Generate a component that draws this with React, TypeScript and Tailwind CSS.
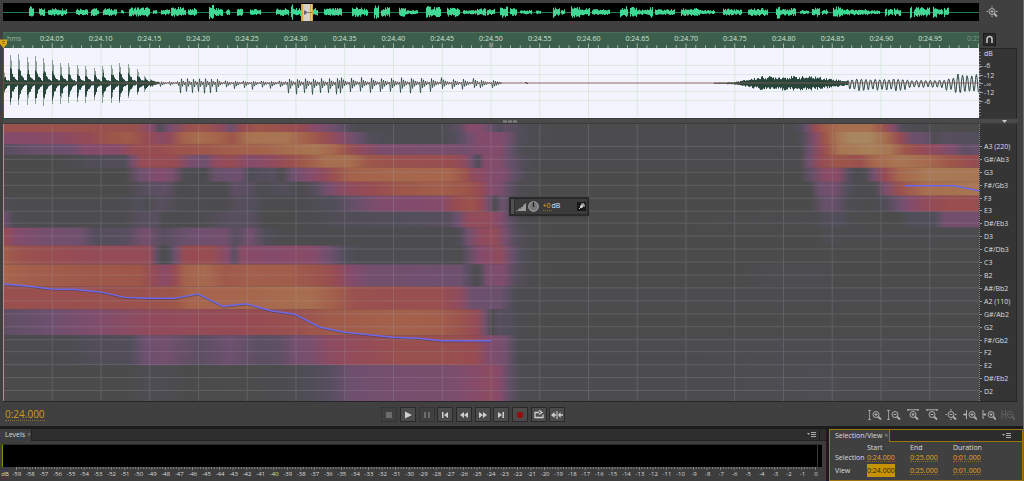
import type { ReactNode } from "react"

type Stop = [number, number]

const PALETTE = [
    [75, 75, 75],
    [81, 78, 90],
    [109, 80, 110],
    [133, 75, 107],
    [151, 75, 82],
    [157, 86, 73],
    [166, 101, 76],
    [168, 118, 82],
    [168, 138, 98],
]

// each band: top, bottom, then [x, level] pairs
const BANDS: { y: [number, number], stops: Stop[] }[] = [
    { y: [124, 132], stops: [[4, 4.5], [60, 4.6], [135, 4.5], [152, 3], [160, 1], [170, 2.5], [190, 4.5], [205, 4.8], [222, 3.5], [231, 2], [242, 4], [260, 5], [280, 4.5], [300, 4], [316, 3], [335, 2], [350, 1], [360, 0.3], [440, 0.3], [460, 1.5], [468, 3], [480, 3], [488, 2], [500, 1], [505, 1.5], [520, 1], [530, 0.4], [560, 0.1], [790, 0.2], [800, 1], [807, 2], [815, 4], [825, 5.5], [840, 6.5], [870, 6.5], [885, 4.5], [893, 3], [902, 1], [915, 0.3], [978, 0]] },
    { y: [132, 144], stops: [[4, 3], [60, 3.3], [90, 3.9], [110, 5], [130, 5.3], [145, 4.2], [160, 3.3], [170, 3.6], [183, 5.8], [200, 6.5], [220, 5.8], [232, 5], [250, 6.8], [285, 7], [305, 5.8], [325, 4.3], [340, 3.2], [355, 2], [370, 1], [385, 0.5], [440, 0.4], [455, 1], [468, 2], [480, 3], [500, 2.8], [508, 2.2], [520, 1], [535, 0.3], [560, 0.1], [795, 0.1], [803, 1], [815, 3], [825, 5], [838, 7], [850, 7.8], [870, 7.8], [885, 6.5], [900, 4], [912, 2], [925, 1.8], [935, 0.6], [945, 1.2], [978, 1]] },
    { y: [144, 155], stops: [[4, 1.2], [30, 1.8], [70, 2], [85, 3], [120, 3.2], [135, 4.2], [160, 4.2], [180, 4.8], [200, 5], [230, 5.5], [260, 5.8], [290, 6.5], [315, 7], [335, 6], [345, 4.8], [360, 3.6], [380, 2.6], [450, 2.5], [465, 2.3], [480, 2.8], [500, 3], [508, 2], [518, 1], [525, 0.3], [560, 0.1], [800, 0.2], [810, 2], [820, 3.7], [828, 5], [840, 7], [870, 7.5], [890, 7], [905, 5], [920, 4], [940, 3.3], [955, 2.5], [965, 1.5], [978, 1.8]] },
    { y: [155, 168], stops: [[4, 0], [60, 0], [90, 0.8], [125, 1], [133, 2.5], [142, 4], [175, 4], [190, 2.5], [205, 2], [215, 3.5], [230, 4], [252, 3], [270, 3.5], [290, 4.3], [305, 5.2], [325, 6.5], [350, 6.5], [370, 5], [400, 4.5], [450, 4.2], [465, 3.5], [472, 2], [478, 0.8], [485, 3], [500, 2.9], [510, 1.8], [525, 0.8], [540, 0.1], [800, 0.1], [808, 2], [820, 3.8], [835, 5], [860, 4.5], [875, 6.2], [900, 7], [930, 6.2], [950, 5], [970, 4.2], [978, 4]] },
    { y: [168, 182], stops: [[4, 0], [125, 0], [140, 2], [160, 3], [172, 2.5], [185, 0.4], [205, 0.1], [215, 1.8], [240, 2], [250, 0.5], [260, 1], [272, 1.2], [282, 0.2], [292, 2], [310, 3], [325, 3.6], [335, 4.5], [350, 5.8], [400, 6.2], [450, 6], [465, 4.8], [472, 3.6], [490, 3], [503, 2.8], [515, 1.5], [525, 0.6], [540, 0], [800, 0], [810, 1.5], [825, 3.2], [838, 3.2], [850, 1], [857, 0.1], [865, 0.5], [875, 2.5], [885, 4], [900, 6.2], [930, 7.2], [978, 7]] },
    { y: [182, 196], stops: [[4, 0], [125, 0], [150, 1.3], [165, 1.5], [180, 0.1], [225, 0.2], [235, 1.5], [250, 1.2], [260, 0.3], [285, 1], [297, 0.3], [302, 0.1], [315, 1.2], [330, 2.5], [345, 3.5], [370, 4], [400, 5], [440, 5.5], [465, 5], [480, 4], [490, 3], [500, 2.6], [510, 1.5], [520, 0.3], [545, 0], [810, 0], [820, 2], [835, 2.3], [848, 1], [860, 0.1], [875, 0.3], [885, 2.5], [900, 4.5], [925, 6.5], [978, 7]] },
    { y: [196, 212], stops: [[4, 0.6], [15, 0.1], [120, 0.1], [140, 0.9], [147, 0.3], [160, 1.3], [180, 0.3], [225, 0.1], [240, 1.2], [255, 1], [265, 0.2], [300, 0.2], [335, 1], [355, 1.8], [380, 2.8], [440, 3], [455, 4], [470, 4.8], [480, 4], [488, 2.5], [495, 0.4], [502, 2], [512, 1], [525, 0.3], [545, 0], [810, 0], [825, 1.8], [835, 1.8], [848, 0.6], [870, 0], [885, 0.8], [900, 2], [910, 3], [930, 3.8], [950, 4.3], [978, 4.2]] },
    { y: [212, 228], stops: [[4, 2], [14, 0.4], [50, 0.1], [125, 0.2], [140, 1.2], [158, 1.2], [163, 0.1], [200, 0.2], [230, 1.2], [252, 1.2], [265, 0], [310, 0.1], [340, 0.8], [400, 1], [450, 1.2], [458, 2], [468, 3.6], [485, 3.8], [500, 3], [510, 1.5], [520, 0.4], [540, 0], [815, 0.1], [825, 1], [840, 1], [850, 0.2], [900, 0], [910, 0.9], [935, 1], [945, 2.3], [978, 2.2]] },
    { y: [228, 246], stops: [[4, 4], [15, 3], [40, 2.4], [80, 2.1], [95, 1.1], [125, 1.2], [145, 2.4], [163, 1.2], [190, 2], [225, 2.2], [235, 1.2], [250, 2.2], [265, 1], [280, 0.1], [450, 0.1], [460, 0.8], [468, 2.2], [480, 3.5], [495, 3.8], [505, 2.5], [515, 1.2], [530, 0.2], [560, 0], [820, 0], [828, 0.6], [838, 0.1]] },
    { y: [246, 265], stops: [[4, 5.5], [20, 4.6], [50, 4.2], [100, 3.8], [150, 3.8], [157, 1.5], [163, 0], [168, 0.5], [175, 2], [185, 4], [210, 4.2], [228, 3], [234, 1.4], [242, 3.2], [270, 3], [300, 3.2], [315, 3], [330, 2], [345, 1], [360, 0.4], [450, 0.4], [460, 0.1], [468, 1.5], [480, 3], [500, 3.6], [510, 2.2], [520, 1], [535, 0]] },
    { y: [265, 287], stops: [[4, 6], [30, 5.5], [80, 5.2], [140, 5], [155, 3.8], [165, 3.2], [175, 4], [185, 5.8], [205, 6.3], [225, 5.2], [250, 5.6], [290, 5.4], [320, 4.7], [335, 4], [350, 3], [370, 2.2], [460, 2], [470, 1.2], [475, 0.1], [480, 0.8], [487, 2.5], [503, 2.8], [515, 1.2], [530, 0.2], [560, 0], [740, 0], [770, 0.3], [820, 0.4], [835, 0]] },
    { y: [287, 310], stops: [[4, 4.4], [40, 4.4], [150, 4.6], [175, 5], [190, 6], [240, 6], [270, 6.3], [310, 6.5], [335, 5.5], [355, 4.5], [400, 4.3], [440, 4.3], [460, 3.5], [472, 2], [500, 1.9], [512, 1], [520, 0.1]] },
    { y: [310, 336], stops: [[4, 1.5], [50, 2], [90, 2.7], [150, 3.6], [200, 3.8], [250, 4], [300, 4.5], [330, 5.3], [400, 5.8], [440, 5.5], [460, 4.7], [478, 3.8], [486, 2], [492, 0], [498, 1.2], [510, 1], [520, 0.2], [560, 0]] },
    { y: [336, 366], stops: [[4, 0.1], [60, 0.1], [90, 0.8], [130, 1], [145, 2], [165, 2.2], [200, 1.4], [230, 2], [260, 1.4], [280, 1.5], [295, 2.3], [310, 2.5], [330, 3.4], [350, 3.7], [400, 4.4], [450, 4.4], [475, 4], [490, 2.8], [505, 2.3], [515, 1], [520, 0.1], [700, 0.1], [760, 0.4], [820, 0.4], [840, 0.1]] },
    { y: [366, 402], stops: [[4, 0], [130, 0], [150, 0.5], [170, 0.4], [185, 0], [280, 0.2], [310, 0.7], [330, 1.2], [350, 2], [400, 2.4], [450, 2.5], [470, 3], [490, 3.4], [500, 3], [510, 1.5], [520, 0.5], [540, 0.2], [700, 0.2], [830, 0.5], [845, 0.1]] },
]

const NOTES = ["A3 (220)", "G#/Ab3", "G3", "F#/Gb3", "F3", "E3", "D#/Eb3", "D3", "C#/Db3", "C3", "B2", "A#/Bb2", "A2 (110)", "G#/Ab2", "G2", "F#/Gb2", "F2", "E2", "D#/Eb2", "D2"]

const TIMES = ["0:24.05", "0:24.10", "0:24.15", "0:24.20", "0:24.25", "0:24.30", "0:24.35", "0:24.40", "0:24.45", "0:24.50", "0:24.55", "0:24.60", "0:24.65", "0:24.70", "0:24.75", "0:24.80", "0:24.85", "0:24.90", "0:24.95", "0:25.00"]

// bursts of speech in the whole file: from, to, height
const BURSTS = [
    [29, 34, 6], [39, 45, 4], [48, 67, 4], [76, 88, 4], [91, 99, 4], [103, 117, 4], [121, 124, 2], [129, 150, 5], [153, 157, 2], [161, 170, 3], [171, 186, 5], [188, 197, 4],
    [209, 214, 8], [214, 223, 4], [226, 230, 3], [237, 243, 4], [250, 261, 3], [276, 289, 4], [291, 293, 8], [293, 301, 4], [313, 318, 4], [324, 342, 4], [352, 362, 5], [362, 368, 4],
    [374, 379, 7], [381, 390, 5], [399, 406, 5], [406, 418, 2], [426, 441, 6], [447, 460, 5], [463, 477, 2], [477, 486, 4], [487, 495, 3], [500, 508, 6], [510, 517, 4], [520, 532, 2],
    [536, 541, 2], [553, 556, 6], [556, 560, 4], [561, 565, 3], [571, 580, 6], [580, 590, 4], [592, 610, 3], [620, 628, 6], [630, 637, 5], [637, 650, 3], [650, 653, 6], [655, 675, 3],
    [681, 700, 4], [700, 715, 2], [723, 732, 4], [732, 742, 3], [748, 768, 4], [776, 780, 7], [780, 796, 4], [800, 809, 2], [812, 820, 5], [822, 828, 3], [833, 843, 6], [843, 868, 3],
    [868, 880, 2], [885, 887, 5], [888, 893, 4], [894, 901, 4], [910, 912, 7], [914, 930, 5], [933, 937, 7], [937, 943, 3], [944, 949, 5],
]

// glottal pulses at the start: x, up, down
const PULSES = [
    [3, 13, 14], [10, 28, 22], [18, 29, 22], [27, 26, 22], [35, 27, 21], [43, 25, 23], [52, 23, 21], [60, 20, 21], [68, 20, 20], [77, 18, 19], [85, 17, 20],
    [94, 15, 17], [102, 17, 20], [111, 18, 20], [119, 20, 20], [128, 19, 15], [137, 14, 12], [144, 7, 9], [150, 4, 4],
]

function noise(i: number) {
    const n = Math.sin(i * 12.9898) * 43758.5453
    return n - Math.floor(n)
}

function overviewPath() {
    let d = ""
    BURSTS.forEach(([from, to, h]) => {
        for (let x = from; x < to; x++) {
            const up = h * (0.35 + 0.65 * noise(x))
            const down = h * (0.35 + 0.55 * noise(x + 700))
            d += `M${x + 0.5} ${12 - up}V${12.5 + down}`
        }
    })
    return d
}

function pulsePath() {
    let d = ""
    PULSES.forEach(([x, up, down]) => {
        for (let i = 0; i < 9; i++) {
            const fall = Math.exp(-i / 3)
            const u = i === 0 ? up * 0.5 : up * 0.7 * fall + 1
            const w = i === 0 ? down * 0.8 : down * 0.85 * fall + 1
            d += `M${x + i + 0.5} ${83 - u * (0.7 + 0.4 * noise(x - i))}V${83 + w * (0.7 + 0.4 * noise(x + i))}`
        }
    })
    return d
}

function spikePath() {
    return PULSES.map(([x, up, down]) => `M${x + 0.5} ${83 - up}V${83 + down}M${x + 1.5} ${83 - up * 0.8}V${83 + down * 0.7}`).join("")
}

function level(x: number) {
    if (x < 180) return [1.5, 4, 8.4]
    if (x < 220) return [7, 10, 6]
    if (x < 285) return [2, 6, 9]
    if (x < 340) return [6, 11, 8]
    if (x < 440) return [7, 10, 10]
    if (x < 478) return [5, 7, 10.5]
    return [3, 5, 12]
}

function voicedPath() {
    let d = "M152 83"
    for (let x = 152; x < 502; x++) {
        const [up, down, period] = level(x)
        const t = (x % period) / period
        const env = Math.exp(-t * 3)
        const y = x % 2 ? 83 - up * env * (0.75 + 0.25 * noise(x)) - 0.5 : 83 + down * env * (0.75 + 0.25 * noise(x + 3)) + 0.5
        d += `L${x + 0.5} ${y}`
    }
    return d
}

function hissPath() {
    let d = ""
    for (let x = 714; x < 848; x++) {
        let a = 0.4
        if (x > 726) a = 0.8
        if (x > 733) a = ((x - 733) / 28) * 6 + 0.8
        if (x > 761) a = 7
        if (x > 815) a = 7 - ((x - 815) / 33) * 5
        d += `M${x + 0.5} ${83 - a * (0.5 + 0.5 * noise(x))}V${83.5 + a * (0.5 + 0.5 * noise(x + 9))}`
    }
    return d
}

function tailPath() {
    let d = "M848 83"
    for (let x = 848; x < 979; x += 0.5) {
        let up = 4
        let down = 8
        if (x > 905) { up = 3; down = 5 }
        if (x > 945) { up = 5; down = 8 }
        if (x > 954) { up = 9; down = 10 }
        const s = Math.sin((x * 2 * Math.PI) / 4.6)
        const wobble = 0.75 + 0.25 * noise(Math.floor(x / 4.6))
        d += `L${x} ${s > 0 ? 83 - up * s * wobble : 83 - down * s * wobble}`
    }
    return d
}

function heat(v: number) {
    const i = Math.min(Math.floor(v), 7)
    const f = v - i
    const c = PALETTE[i].map((a, k) => Math.round(a + (PALETTE[i + 1][k] - a) * f))
    return `rgb(${c.join(",")})`
}

function MagnifierShape({ x = 0, plus = true }: { x?: number, plus?: boolean }) {
    return <g transform={`translate(${x} 0)`} fill="none" stroke="currentColor">
        <circle cx="6" cy="5.5" r="3" />
        <path d="M8 7.5l3 3" strokeWidth="1.8" />
        <path d={plus ? "M4.5 5.5h3M6 4v3" : "M4.5 5.5h3"} />
    </g>
}

function ZoomIcon({ children }: { children: ReactNode }) {
    return <svg viewBox="0 0 14 12" className="w-3.5 h-3" fill="none" stroke="currentColor">{children}</svg>
}

function Overview() {
    return <div className="flex items-center pt-[3px] pl-[3px]">
        <svg className="flex-1 h-[18px] min-w-0 bg-black" viewBox="3 3 976 18" preserveAspectRatio="none">
            <path d="M3 12.5H979" stroke="#1f7a4f" />
            <path d={overviewPath()} stroke="#43d796" strokeWidth="1.1" />
            <rect x="301" y="4" width="12" height="17" fill="#d3a64a" />
            <rect x="304" y="4" width="6" height="17" fill="#d6d2c8" />
            <path d="M303.5 4V21M311.5 4V21" stroke="#ecc674" />
            <path d="M304 10l4 2.500l-4 2.500z" fill="#666" />
            <path d="M308 12.500H312" stroke="#8d7a4c" />
        </svg>
        <button aria-label="Zoom out full" className="w-11 pl-[7px] text-[#b5b5b5]">
            <ZoomIcon>
                <MagnifierShape />
                <path d="M6 0v1.500M6 9.500v1.500M.5 5.500h1.500M10 5.500h1.500" />
            </ZoomIcon>
        </button>
    </div>
}

function Ruler() {
    const ticks = []
    for (let i = 0; i <= 100; i++) {
        const x = 3.5 + i * 9.75
        ticks.push(`M${x} ${i % 5 ? 13 : 11}V16`)
    }
    return <div className="flex mt-[11px] pl-[3px] h-4">
        <div className="relative flex-1 min-w-0 bg-[#3c5e4c] border-t border-[#4b6f5b]">
            <svg className="absolute inset-0 w-full h-full" viewBox="3 0 976 16" preserveAspectRatio="none">
                <path d={ticks.join("")} stroke="#9db5a3" />
                <path d="M490 10v5M492.500 10v5" stroke="#8b8b8b" strokeWidth="1.500" />
            </svg>
            <div className="flex h-full overflow-hidden">
                <span className="w-[2.5%] shrink-0" />
                {TIMES.map((t, i) => <span key={t} className={i === 19 ? "w-[5%] shrink-0 text-center leading-[11px] text-[#7f9a88]" : "w-[5%] shrink-0 text-center leading-[11px] text-[#cfe2d4]"}>{t}</span>)}
            </div>
            <span className="absolute left-1 top-0 leading-[11px] text-[#9db5a3]">hms</span>
            <svg className="absolute left-[-3px] top-[6px] w-[7px] h-[9px]" viewBox="0 0 7 9">
                <path d="M0 0.500H7V5L3.500 9L0 5z" fill="#d9a514" />
                <path d="M2 2.500h3M2.500 4.500h2" stroke="#7d5c00" strokeWidth="0.8" />
            </svg>
        </div>
        <div className="w-11 flex pl-1">
            <button aria-label="Toggle snapping" className="w-[13px] h-[13px] mt-px flex items-center justify-center bg-[#2b2b2b] border border-[#1c1c1c]">
                <svg className="w-[9px] h-[9px]" viewBox="0 0 9 9" fill="none">
                    <path d="M2 8V4a2.500 2.500 0 015 0v4" stroke="#c4c4c4" strokeWidth="1.600" />
                </svg>
            </button>
        </div>
    </div>
}

function GridColumns({ color, top, bottom }: { color: string, top: number, bottom: number }) {
    let d = ""
    for (let i = 1; i < 20; i++) d += `M${3.5 + i * 48.75} ${top}V${bottom}`
    return <path d={d} stroke={color} />
}

function Waveform() {
    return <div className="flex pl-[3px] h-[70px]">
        <svg className="flex-1 h-full min-w-0 bg-[#f4f4ff]" viewBox="3 48 976 70" preserveAspectRatio="none">
            <GridColumns color="#dbe9e0" top={48} bottom={118} />
            <path d="M3 65.500H979M3 74.500H979M3 91.500H979M3 100.500H979" stroke="#dbe9e0" />
            <path d={spikePath()} stroke="#8d9e96" />
            <path d="M495 83H979" stroke="#7a7a78" strokeWidth="0.8" />
            <g fill="none" stroke="#28453a">
                <path d={pulsePath()} />
                <path d={voicedPath()} strokeWidth="0.8" />
                <path d="M525 83l1-1l1 2l1-1" />
                <path d={hissPath()} />
                <path d={tailPath()} />
            </g>
            <path d="M3 83H979" stroke="#c46a6a" strokeWidth="0.7" opacity="0.7" />
            <path d="M3.500 48V118" stroke="#b03030" />
        </svg>
        <div className="w-[38px] relative bg-[#353535] border-r border-t border-[#262626] text-[#dedede]">
            <svg className="absolute left-0 top-0 w-1 h-[70px]" viewBox="0 0 4 70" preserveAspectRatio="none">
                <path d="M0.500 3V68" stroke="#999" strokeWidth="2" strokeDasharray="1 2" />
                <path d="M0 17.500H4M0 26.500H4M0 34.500H4M0 43.500H4M0 52.500H4" stroke="#999" />
            </svg>
            <div className="pl-[5px] leading-[9px]">
                <div className="h-[11px]">dB</div>
                <div className="h-[11px] pt-px">-6</div>
                <div className="h-[34px] grid grid-rows-4">
                    <span>-12</span>
                    <span>-∞</span>
                    <span>-12</span>
                    <span>-6</span>
                </div>
            </div>
        </div>
        <div className="w-[6px]" />
    </div>
}

function Splitter() {
    return <div className="relative flex items-center justify-center h-[6px] ml-[3px] mr-[5px] bg-[#4a4a4a] border-y border-[#3a3a3a]">
        <svg className="w-[15px] h-[3px]" viewBox="0 0 15 3">
            <path d="M0 1.500H15" stroke="#858585" strokeWidth="2" strokeDasharray="4 1" />
        </svg>
        <svg className="absolute right-[11px] top-px w-[5px] h-[3px]" viewBox="0 0 5 3"><path d="M0 0H5L2.500 3z" fill="#ccc" /></svg>
    </div>
}

function Hud() {
    return <div className="absolute left-[51.8%] top-[73px] flex items-center w-20 h-[19px] bg-[#3b3b3b] border-2 border-[#2a2a2a] shadow">
        <span className="w-1 h-full bg-[#505050] border-r border-[#2f2f2f]" />
        <svg className="w-6 h-[15px]" viewBox="1 0 24 15">
            <path d="M1 12H12V4L9 6.500V8H7V9.500H4.500V11z" fill="#9a9a9a" />
            <circle cx="19.500" cy="7.500" r="4.800" fill="#777" stroke="#b0b0b0" />
            <path d="M19.500 3V8" stroke="#222" strokeWidth="1.300" />
        </svg>
        <label className="flex items-center flex-1 pl-1 text-[#e4e4e4]">
            <input aria-label="Gain" defaultValue="+0" className="w-[9px] h-[9px] p-0 bg-transparent text-[#e2a01a] border-b border-dotted border-[#8d6b20]" />dB
        </label>
        <button aria-label="Pin" className="w-[9px] h-[9px] mr-px bg-[#191919]">
            <svg className="w-[9px] h-[9px]" viewBox="0 0 9 9" stroke="#ddd" fill="none">
                <path d="M4 2H7V5M6.500 2.500L2 7" />
                <path d="M3.500 3.500l2 2" strokeWidth="2" />
            </svg>
        </button>
    </div>
}

function Spectrogram() {
    let lines = ""
    NOTES.forEach((_, i) => { lines += `M3 ${146.5 + Math.round(i * 12.9)}H979` })
    return <div className="flex flex-1 min-h-[278px] pl-[3px]">
        <div className="relative flex-1 min-w-0 bg-[#4a4a4b] border-b border-[#262626]">
            <svg className="absolute inset-0 w-full h-full" viewBox="3 124 976 278" preserveAspectRatio="none">
                <defs>
                    {BANDS.map((b, i) => <linearGradient key={i} id={`band${i}`} gradientUnits="userSpaceOnUse" x1="0" x2="1000" y1="0" y2="0">
                        {b.stops.map(([x, v]) => <stop key={x} offset={x / 1000} stopColor={heat(v)} />)}
                    </linearGradient>)}
                </defs>
                {BANDS.map((b, i) => <rect key={i} x="3" y={b.y[0]} width="976" height={b.y[1] - b.y[0]} fill={`url(#band${i})`} />)}
                <g opacity="0.22">
                    <GridColumns color="#aaaab8" top={124} bottom={402} />
                    <path d={lines} stroke="#aaaab8" />
                </g>
                <g fill="none" strokeLinejoin="round">
                    <g transform="translate(0 1)" stroke="#3b3b50" opacity="0.6">
                        <path d="M4 284.500L27 286.500L52 289.500L76 290L100 292.500L125 298L150 299H174L198 294.500L223 307L247 304.500L271 311.500L295 315L320 328L345 333L393 338L418 339L442 341.500H491" />
                    </g>
                    <path stroke="#6d68ea" strokeWidth="1.500" d="M4 284.500L27 286.500L52 289.500L76 290L100 292.500L125 298L150 299H174L198 294.500L223 307L247 304.500L271 311.500L295 315L320 328L345 333L393 338L418 339L442 341.500H491" />
                    <path stroke="#6d68ea" strokeWidth="1.500" d="M905 186H954L979 191" />
                </g>
                <path d="M3.500 124V402" stroke="#b58f93" />
            </svg>
            <Hud />
        </div>
        <div className="w-[38px] flex bg-[#353535] border-r border-b border-[#262626]">
            <div className="flex flex-col flex-1 pt-4 pb-[3px] border-l border-dotted border-[#888] text-[#dedede] leading-[9px]">
                {NOTES.map(n => <div key={n} className="flex flex-1 items-center whitespace-nowrap">
                    <span className="w-[2px] h-px mr-[2px] bg-[#999]" />{n}
                </div>)}
            </div>
        </div>
        <div className="w-[6px]" />
    </div>
}

const TRANSPORT: { name: string, dim?: boolean, icon: ReactNode }[] = [
    { name: "Stop", dim: true, icon: <rect x="3" y="2" width="6" height="6" /> },
    { name: "Play", icon: <path d="M3 1.500L10 5L3 8.500z" /> },
    { name: "Pause", dim: true, icon: <path d="M3 2H5V8H3zM7 2H9V8H7z" /> },
    { name: "Move to previous", icon: <path d="M3 2H4.500V8H3zM9 2V8L5 5z" /> },
    { name: "Rewind", icon: <path d="M6 2V8L2 5zM10 2V8L6 5z" /> },
    { name: "Fast forward", icon: <path d="M2 2V8L6 5zM6 2V8L10 5z" /> },
    { name: "Move to next", icon: <path d="M3 2V8L7 5zM7.500 2H9V8H7.500z" /> },
    { name: "Record", icon: <circle cx="6" cy="5" r="3.200" fill="#8e1010" /> },
    { name: "Loop playback", icon: <path d="M6 2.500H2V7.500H10V4.500M6 .5L9 2.500L6 4.500" fill="none" stroke="currentColor" strokeWidth="1.300" /> },
    { name: "Skip selection", icon: <path d="M0 5L3.500 2V8zM3.500 4.300H5V5.700H3.500zM5.500 1H6.500V9H5.500zM7 5L9.500 2V8zM9.500 4.300H12V5.700H9.500z" /> },
]

function Transport() {
    return <div className="grid grid-cols-[5fr_184px_6fr] items-center h-6 pt-px">
        <div className="pl-[5px]">
            <input aria-label="Current time" defaultValue="0:24.000" className="block w-10 h-[13px] p-0 bg-transparent text-[10px] leading-[12px] text-[#d09a1a] border-b border-dotted border-[#8d6b20]" />
        </div>
        <div className="flex justify-between">
            {TRANSPORT.map(b => <button key={b.name} aria-label={b.name} className={b.dim
                ? "w-4 h-[15px] flex items-center justify-center border border-[#353535] text-[#6c6c6c]"
                : "w-4 h-[15px] flex items-center justify-center border border-[#292929] bg-[#4b4b4b] text-[#cfcfcf]"}>
                <svg className="w-3 h-[10px]" viewBox="0 0 12 10" fill="currentColor">{b.icon}</svg>
            </button>)}
        </div>
        <div className="flex justify-end gap-[5px] pr-2 text-[#adadad]">
            <button aria-label="Zoom in amplitude"><ZoomIcon><MagnifierShape x={2} /><path d="M1.500 1V11M0 1.500H3M0 10.500H3" strokeWidth="0.8" /></ZoomIcon></button>
            <button aria-label="Zoom out amplitude"><ZoomIcon><MagnifierShape x={2} plus={false} /><path d="M1.500 1V11M0 1.500H3M0 10.500H3" strokeWidth="0.8" /></ZoomIcon></button>
            <button aria-label="Zoom in time"><ZoomIcon><MagnifierShape x={1} /><path d="M1 .8H13M2 0V2M12 0V2" /></ZoomIcon></button>
            <button aria-label="Zoom out time"><ZoomIcon><MagnifierShape x={1} plus={false} /><path d="M1 .8H13M2 0V2M12 0V2" /></ZoomIcon></button>
            <button aria-label="Zoom out all"><ZoomIcon><MagnifierShape x={1} plus={false} /><path d="M7 0v1.500M7 9.500v1.500M1.500 5.500h1.500M11 5.500h1.500" /></ZoomIcon></button>
            <button aria-label="Zoom to in point"><ZoomIcon><MagnifierShape x={3} /><path d="M3.500 1V10M0 5.500H3M2 4V7" /></ZoomIcon></button>
            <button aria-label="Zoom to out point"><ZoomIcon><MagnifierShape x={3} /><path d="M1 1V10M1 5.500H4M3 4V7" /></ZoomIcon></button>
            <button aria-label="Zoom to selection" className="text-[#606060]"><ZoomIcon><MagnifierShape x={3} plus={false} /><path d="M1 1V10M1 5.500H4M4.500 1V10" /></ZoomIcon></button>
        </div>
    </div>
}

function PanelMenu() {
    return <button aria-label="Panel menu" className="ml-auto w-[10px] h-[7px]">
        <svg className="w-[10px] h-[7px]" viewBox="0 0 10 7"><path d="M0 2H3L1.500 4z" fill="#aaa" /><path d="M4 1.500H9M4 3.500H9M4 5.500H9" stroke="#aaa" /></svg>
    </button>
}

function Levels() {
    let ticks = ""
    for (let i = 0; i <= 295; i++) ticks += `M${(16.5 + i * 2.708).toFixed(1)} 0V${i % 5 ? 2 : 3}`
    return <section className="flex-1 min-w-0 bg-[#3d3d3d]">
        <div className="flex items-center h-3 pr-[6px] bg-[#2e2e2e] border-b border-[#222]">
            <h2 className="w-8 h-3 pl-[5px] leading-[12px] bg-[#3d3d3d] border-r border-[#222] text-[#dadada] whitespace-nowrap">Levels <span className="text-[#888]">×</span></h2>
            <PanelMenu />
            <span className="w-px h-3 ml-[2px] bg-[#1e1e1e]" />
        </div>
        <div className="flex mt-[3px] ml-[2px] mr-1 h-[23px] bg-black border-t border-l border-l-[#8c8c00] border-t-[#2a2a2a]">
            <span className="ml-auto mr-1 w-px h-full bg-[#3a3a3a]" />
        </div>
        <svg className="block w-full h-[3px]" viewBox="0 0 826 3" preserveAspectRatio="none"><path d={ticks} stroke="#9a9a9a" strokeWidth="0.8" /></svg>
        <div className="flex pr-[3px] text-[6px] leading-[8px] text-[#dadada]">
            <span className="w-[10px] text-center">dB</span>
            {Array.from({ length: 60 }, (_, i) => <span key={i} className="flex-1 w-0 text-center">{i === 59 ? "0" : i - 59}</span>)}
        </div>
    </section>
}

function TimeInput({ label, value, active }: { label: string, value: string, active?: boolean }) {
    return <input aria-label={label} defaultValue={value} className={active
        ? "block w-7 h-[13px] p-0 bg-[#c79305] text-[#2e2400]"
        : "block w-7 h-[9px] p-0 bg-transparent text-[#e0a01c] border-b border-dotted border-[#8d6b20]"} />
}

function SelectionView() {
    return <section className="w-[194px] flex flex-col border border-[#9c750e] bg-[#404040] text-[#dedede]">
        <div className="flex items-center h-3 pr-[10px] bg-[#2c2c2c] border-b border-[#9c750e]">
            <h2 className="h-3 pl-[5px] pr-px leading-[12px] bg-[#404040] border-r border-[#9c750e] whitespace-nowrap">Selection/View <span className="text-[#999]">×</span></h2>
            <PanelMenu />
        </div>
        <table className="w-[172px] ml-[5px] table-fixed text-left leading-[9px]">
            <thead>
                <tr className="h-[10px]">
                    <th className="w-8 p-0" />
                    <th className="w-[43px] p-0 font-normal">Start</th>
                    <th className="w-[43px] p-0 font-normal">End</th>
                    <th className="p-0 font-normal">Duration</th>
                </tr>
            </thead>
            <tbody>
                <tr className="h-[11px]">
                    <th className="p-0 font-normal">Selection</th>
                    <td className="p-0"><TimeInput label="Selection start" value="0:24.000" /></td>
                    <td className="p-0"><TimeInput label="Selection end" value="0:25.000" /></td>
                    <td className="p-0"><TimeInput label="Selection duration" value="0:01.000" /></td>
                </tr>
                <tr className="h-[15px]">
                    <th className="p-0 font-normal">View</th>
                    <td className="p-0"><TimeInput label="View start" value="0:24.000" active /></td>
                    <td className="p-0"><TimeInput label="View end" value="0:25.000" /></td>
                    <td className="p-0"><TimeInput label="View duration" value="0:01.000" /></td>
                </tr>
            </tbody>
        </table>
    </section>
}

export default function App() {
    return <main className="flex flex-col min-h-screen bg-[#404040] border-r border-[#6a6a6a] font-['Open_Sans',sans-serif] text-[7px]">
        <Overview />
        <Ruler />
        <Waveform />
        <Splitter />
        <Spectrogram />
        <Transport />
        <div className="flex h-[55px] pt-[3px] bg-[#1c1c1c]">
            <Levels />
            <div className="w-[3px]" />
            <SelectionView />
        </div>
    </main>
}
